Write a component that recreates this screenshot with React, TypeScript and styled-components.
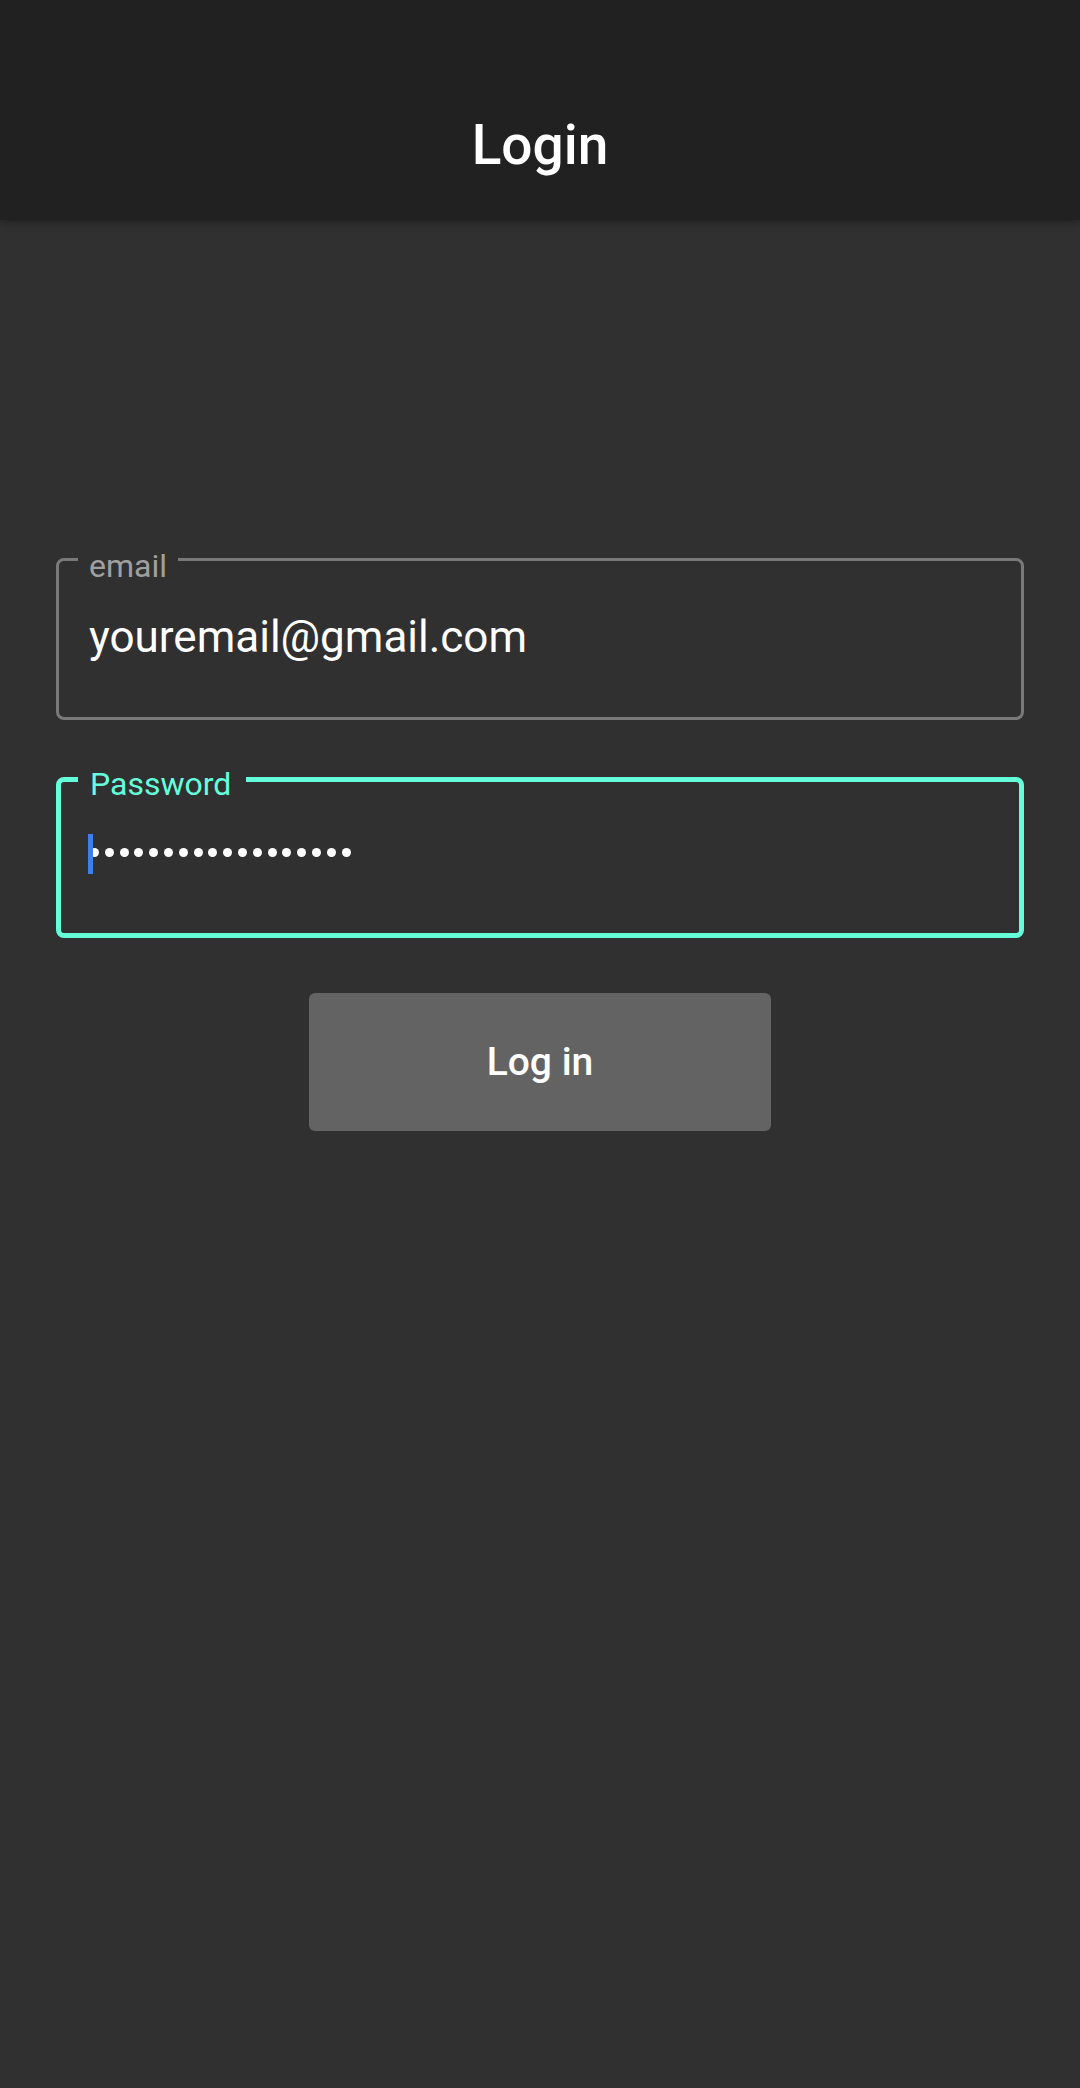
import React from "react";
import styled, { createGlobalStyle } from "styled-components";

const GlobalStyle = createGlobalStyle`
  html, body {
    margin: 0;
    padding: 0;
    background: #303030;
  }
  body {
    font-family: Roboto, "Noto Sans", "Liberation Sans", sans-serif;
    color: #ffffff;
  }
  * { box-sizing: border-box; }
`;

const Screen = styled.div`
  min-height: 2088px;
  background: #303030;
  display: flex;
  flex-direction: column;
`;

const AppBar = styled.header`
  height: 220px;
  background: #212121;
  display: flex;
  justify-content: center;
  align-items: flex-start;
  padding-top: 112px;
  box-shadow: 0 2px 8px rgba(0, 0, 0, 0.35);
  position: relative;
  z-index: 1;
`;

const Title = styled.h1`
  margin: 0;
  font-size: 55px;
  line-height: 66px;
  font-weight: 500;
  color: #ffffff;
`;

const Form = styled.main`
  display: flex;
  flex-direction: column;
  align-items: stretch;
  padding: 314px 56px 0;
`;

const Field = styled.fieldset<{ $focused?: boolean }>`
  margin: 0 0 ${(p) => (p.$focused ? "55px" : "36px")};
  min-width: 0;
  border: ${(p) => (p.$focused ? "5px solid #64ffda" : "3px solid #797979")};
  border-radius: 8px;
  padding: 0 0 ${(p) => (p.$focused ? "59px" : "55px")}
    ${(p) => (p.$focused ? "17px" : "19px")};
`;

const Legend = styled.legend<{ $focused?: boolean }>`
  padding: ${(p) => (p.$focused ? "9px" : "13px")} ${(p) => (p.$focused ? "15px" : "11px")} 0
    ${(p) => (p.$focused ? "12px" : "11px")};
  font-size: 32px;
  line-height: 38px;
  font-weight: 400;
  color: ${(p) => (p.$focused ? "#64ffda" : "#a0a0a0")};
`;

const Value = styled.div`
  margin-top: 27px;
  padding-left: 11px;
  font-size: 44px;
  line-height: 50px;
  color: #ffffff;
  white-space: nowrap;
`;

const MaskRow = styled.div`
  margin-top: 31px;
  padding-left: 10px;
  height: 40px;
  display: flex;
  align-items: center;
  position: relative;
`;

const Caret = styled.span`
  position: absolute;
  left: 10px;
  top: 0;
  width: 5px;
  height: 40px;
  background: #3f7fe8;
`;

const Dots = styled.div`
  display: flex;
  align-items: center;
  gap: 5.8px;
  margin-top: -4px;
  padding-left: 2px;
`;

const Dot = styled.span`
  width: 9px;
  height: 9px;
  border-radius: 50%;
  background: #ffffff;
`;

const SubmitButton = styled.button`
  align-self: center;
  width: 462px;
  height: 138px;
  border: none;
  border-radius: 6px;
  background: #636363;
  color: #ffffff;
  font-family: Roboto, "Noto Sans", "Liberation Sans", sans-serif;
  font-size: 39px;
  font-weight: 500;
  cursor: pointer;
`;

export default function App() {
  const dots = Array.from({ length: 18 });
  return (
    <>
      <GlobalStyle />
      <Screen>
        <AppBar>
          <Title>Login</Title>
        </AppBar>
        <Form>
          <Field>
            <Legend>email</Legend>
            <Value>youremail@gmail.com</Value>
          </Field>
          <Field $focused>
            <Legend $focused>Password</Legend>
            <MaskRow aria-label="password">
              <Caret />
              <Dots>
                {dots.map((_, i) => (
                  <Dot key={i} />
                ))}
              </Dots>
            </MaskRow>
          </Field>
          <SubmitButton type="button">Log in</SubmitButton>
        </Form>
      </Screen>
    </>
  );
}
